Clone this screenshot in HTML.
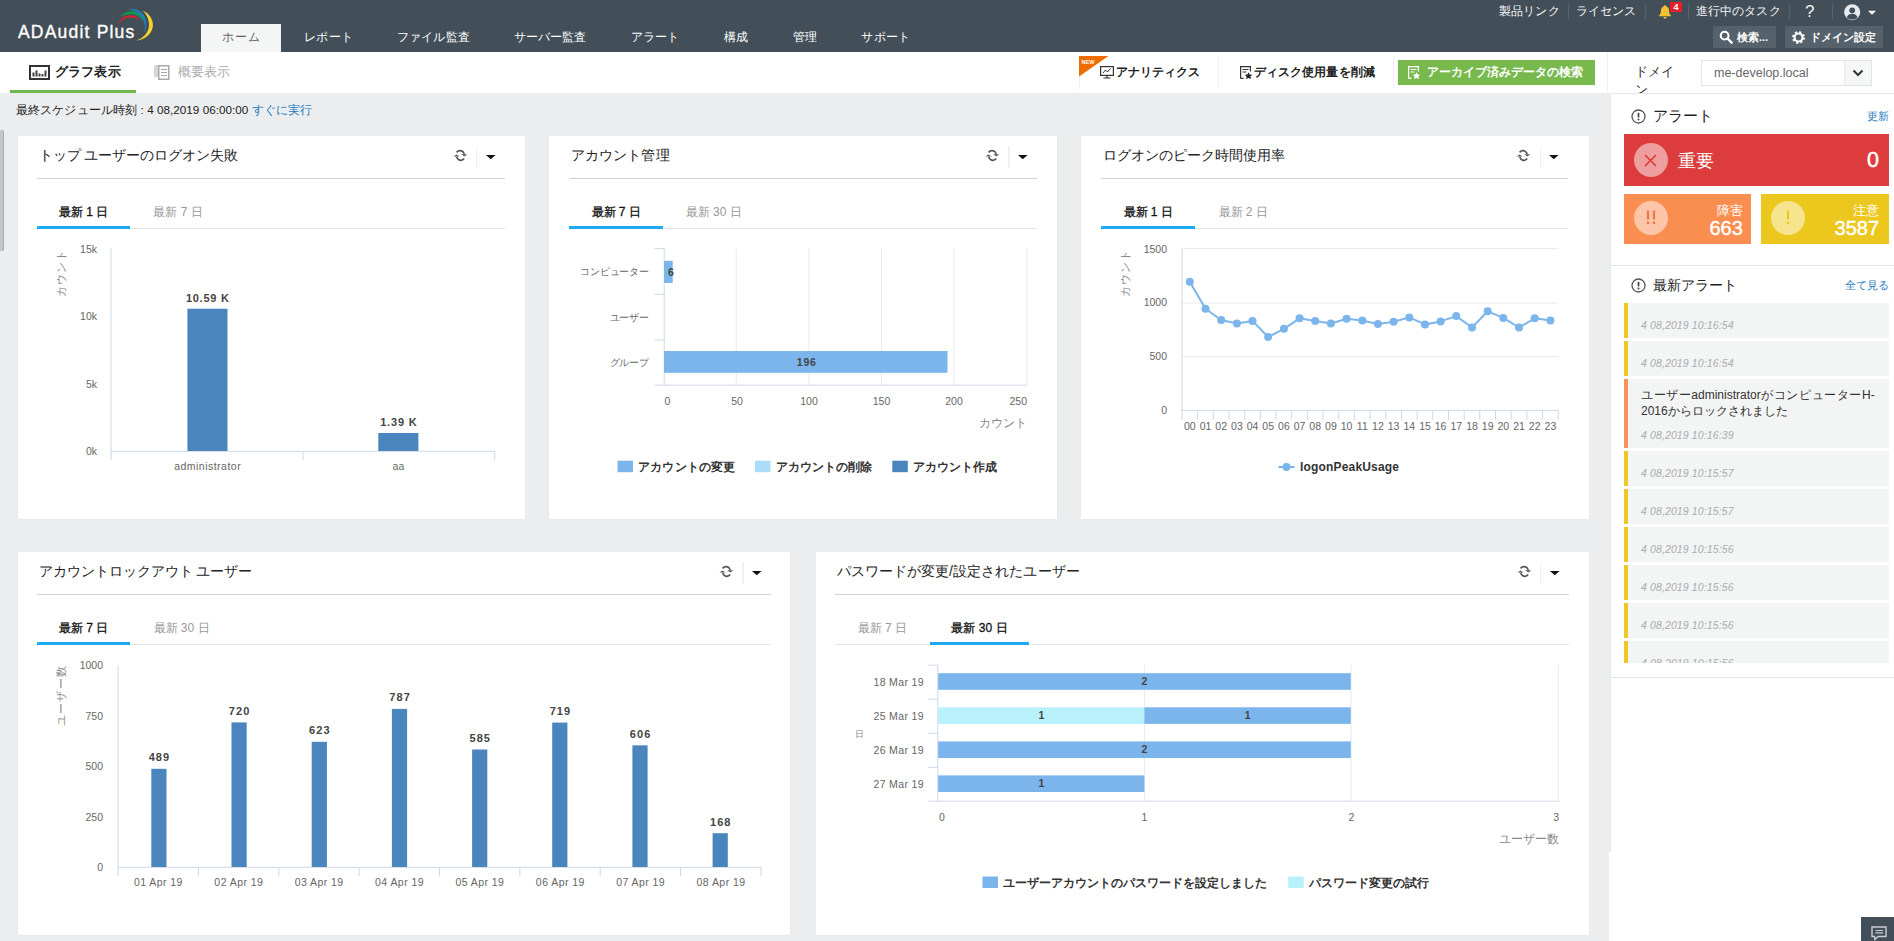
<!DOCTYPE html>
<html lang="ja"><head><meta charset="utf-8"><title>ADAudit Plus</title>
<style>
*{box-sizing:border-box;margin:0;padding:0}
html,body{width:1894px;height:941px;overflow:hidden;background:#ecedef}
body{font-family:"Liberation Sans",sans-serif;font-size:12px;color:#333;position:relative}
.abs{position:absolute}
.nw{white-space:nowrap}
.j{display:inline-block;text-align:justify;text-align-last:justify;white-space:nowrap}
#hdr{position:absolute;left:0;top:0;width:1894px;height:52px;background:#434f58}
#logo{position:absolute;left:18px;top:21px;font-size:17.5px;line-height:22px;color:#fff;letter-spacing:1.2px;white-space:nowrap;-webkit-text-stroke:.35px #fff}
.tab{position:absolute;top:24px;height:28px;line-height:27px;font-size:12.2px;color:#fff;white-space:nowrap;text-align:center}
.tab.on{background:#f4f5f5;color:#666}
.tl{position:absolute;top:3px;height:17px;line-height:17px;font-size:12.1px;color:#f3f5f6;white-space:nowrap}
.tsep{position:absolute;top:3px;width:1px;height:17px;background:#56626b}
.hbtn{position:absolute;top:26px;height:22px;background:#56626b;color:#fff;font-size:11px;font-weight:bold;line-height:22px;white-space:nowrap}
#bar{position:absolute;left:0;top:52px;width:1894px;height:41px;background:#fff}
.bsep{position:absolute;top:4px;width:1px;height:33px;background:#eef0f1}
.btxt{position:absolute;top:11px;height:18px;line-height:18px;font-size:12px;font-weight:bold;color:#222;white-space:nowrap}
.panel{position:absolute;background:#fff;box-shadow:0 0 1px rgba(0,0,0,.08)}
.ptitle{position:absolute;top:8.600px;font-size:14px;line-height:20px;color:#222;white-space:nowrap}
.pline{position:absolute;top:42px;height:1px;background:#cdd1d4}
.ptab{position:absolute;top:66px;height:20px;line-height:20px;font-size:12px;white-space:nowrap;text-align:center;color:#999}
.ptab.on{color:#111;-webkit-text-stroke:.3px #111}
.pul{position:absolute;top:92px;height:1px;background:#e3e6e8}
.pon{position:absolute;top:89.800px;height:3.200px;background:#1eaaf1}
.psep{position:absolute;top:10px;width:1.500px;height:22px;background:#f0f0f0}
svg{position:absolute;overflow:visible}
svg text{font-family:"Liberation Sans",sans-serif}
#side{position:absolute;left:1609.500px;top:93px;width:285px;height:848px;background:#fff;border-left:1px solid #e3e8ea;border-top:1px solid #e3e8ea}
.sh{position:absolute;font-size:14.5px;line-height:20px;color:#222;white-space:nowrap}
.slink{position:absolute;font-size:11px;line-height:16px;color:#1f7bbd;white-space:nowrap;text-align:right}
.abox{position:absolute;color:#fff}
.circ{position:absolute;width:34px;height:34px;border-radius:50%;background:rgba(255,255,255,.5)}
.item{position:absolute;left:1624px;width:265px;height:35px;background:#f3f4f4;border-left:4px solid #f0c526}
.item .d{position:absolute;left:13px;font-size:10.500px;line-height:14px;color:#a9adb0;font-style:italic;white-space:nowrap;letter-spacing:.12px}
</style></head>
<body>
<div id="hdr">
<div id="logo">ADAudit Plus</div>
<svg style="left:114px;top:4px" width="44" height="42" viewBox="114 4 44 42">
<path d="M118.100 25.200C119.500 18.500 125 15 130 15.200C135 15.400 139 17.800 141.200 21C138 18.600 134.500 17.600 130 17.600C125 17.600 121 20 118.100 25.200Z" fill="#d9232e"/>
<path d="M120 16.800C124 12.500 128.500 11 132.500 11.300C139 11.800 143.600 17 144.800 24C142.500 18.500 138 14.600 132 14.200C127.500 13.900 123.500 14.800 120 16.800Z" fill="#0f9a4a"/>
<path d="M128.800 9.400C134 8.300 139.500 10 143 14C147 18.600 147.300 27 144 33C145.600 27 144.800 21 141.600 16.600C138.500 12.400 134 10.200 128.800 9.400Z" fill="#1d7fc1"/>
<path d="M142.500 10.400C149 13 153.200 19 152.900 25.500C152.500 33.500 145.500 39.600 136.200 40.800C143.500 38 148.600 32.400 149 25.500C149.300 19.500 146.800 14.400 142.500 10.400Z" fill="#f6d12b"/>
</svg>
<div class="tab on" style="left:201px;width:80px"><span class="j" style="width:37.6px">ホーム</span></div>
<div class="tab" style="left:282.5px;width:92px"><span class="j" style="width:48.2px">レポート</span></div>
<div class="tab" style="left:375.3px;width:116px"><span class="j" style="width:72.7px">ファイル監査</span></div>
<div class="tab" style="left:492px;width:116px"><span class="j" style="width:72.8px">サーバー監査</span></div>
<div class="tab" style="left:609px;width:92px"><span class="j" style="width:48.6px">アラート</span></div>
<div class="tab" style="left:701.8px;width:68px"><span class="j" style="width:24.6px">構成</span></div>
<div class="tab" style="left:771px;width:68px"><span class="j" style="width:24.6px">管理</span></div>
<div class="tab" style="left:839.7px;width:92px"><span class="j" style="width:48.7px">サポート</span></div>
<div class="tl" style="left:1498.500px"><span class="j" style="width:61.2px">製品リンク</span></div><div class="tsep" style="left:1568px"></div>
<div class="tl" style="left:1576px"><span class="j" style="width:60.3px">ライセンス</span></div><div class="tsep" style="left:1645px"></div>
<svg style="left:1657px;top:4px" width="16" height="16" viewBox="0 0 16 16"><path d="M8 1.200c.7 0 1.100.4 1.100 1 2 .6 3 2.300 3 4.500 0 2.600.6 3.800 1.900 4.900v.6H2v-.6c1.300-1.100 1.900-2.300 1.900-4.900 0-2.200 1-3.900 3-4.500 0-.6.400-1 1.100-1zM6.400 13h3.200c0 .9-.7 1.600-1.600 1.600s-1.600-.7-1.600-1.600z" fill="#f2c230"/></svg>
<div class="abs" style="left:1670px;top:2px;width:12px;height:10px;background:#e5202c;color:#fff;font-size:9px;font-weight:bold;line-height:10px;text-align:center;border-radius:1px">4</div>
<div class="tsep" style="left:1688px"></div><div class="tl" style="left:1696px"><span class="j" style="width:84.5px">進行中のタスク</span></div><div class="tsep" style="left:1789px"></div>
<div class="tl" style="left:1805px;font-size:17px;top:3px">?</div><div class="tsep" style="left:1832px"></div>
<svg style="left:1844px;top:4px" width="34" height="17" viewBox="0 0 34 17"><circle cx="8.200" cy="8.200" r="8" fill="#e9ecee"/><circle cx="8.200" cy="6.300" r="2.900" fill="#434f58"/><path d="M2.800 13.200c.9-2.300 3-3.400 5.400-3.400s4.500 1.100 5.400 3.400c-1.400 1.500-3.200 2.400-5.400 2.400s-4-.9-5.400-2.400z" fill="#434f58"/><path d="M24 6.800h8l-4 4z" fill="#fff"/></svg>
<div class="hbtn" style="left:1713px;width:63px"><svg style="left:6px;top:4px" width="14" height="14" viewBox="0 0 14 14"><circle cx="5.600" cy="5.600" r="3.900" fill="none" stroke="#fff" stroke-width="2"/><path d="M8.500 8.500l4.200 4.200" stroke="#fff" stroke-width="2.400" stroke-linecap="round"/></svg><span class="abs" style="left:24px"><span class="j" style="width:30.5px">検索...</span></span></div>
<div class="hbtn" style="left:1785px;width:98px"><svg style="left:7px;top:5px" width="13" height="13" viewBox="0 0 13 13"><circle cx="6.500" cy="6.500" r="4" fill="none" stroke="#fff" stroke-width="2.200"/><circle cx="6.500" cy="6.500" r="5.600" fill="none" stroke="#fff" stroke-width="1.600" stroke-dasharray="2.200 2.200"/></svg><span class="abs" style="left:25px"><span class="j" style="width:65.6px">ドメイン設定</span></span></div>
</div>
<div id="bar">
<svg style="left:29px;top:13px" width="21" height="15" viewBox="0 0 21 15"><rect x="1" y="1" width="19" height="13" fill="none" stroke="#333" stroke-width="2"/><path d="M4.500 11.500V7.500M7.500 11.500V5.500M10.500 11.500V8.500M13.500 11.500V9M16.500 11.500V5.500" stroke="#444" stroke-width="2"/></svg>
<div class="abs nw" style="left:55px;top:11px;font-size:13px;font-weight:bold;line-height:18px;color:#222"><span class="j" style="width:65.5px">グラフ表示</span></div>
<div class="abs" style="left:10px;top:38px;width:125.500px;height:3px;background:#70b84a"></div>
<svg style="left:154px;top:13px" width="16" height="15" viewBox="0 0 16 15"><path d="M0 0h4v12H0z" fill="#d5d7d8"/><rect x="4.750" y=".75" width="10" height="13.500" fill="#fff" stroke="#aaa" stroke-width="1.500"/><path d="M7 4.500h6M7 7.500h6M7 10.500h6" stroke="#aaa" stroke-width="1"/></svg>
<div class="abs nw" style="left:178px;top:11px;font-size:13px;line-height:18px;color:#aaa"><span class="j" style="width:52px">概要表示</span></div>
<div class="bsep" style="left:1079px"></div>
<svg style="left:1079px;top:4px" width="30" height="21" viewBox="0 0 30 21"><path d="M0 0h29.500L0 20.500z" fill="#ef6c00"/><text x="2.500" y="8" font-size="5.500" font-weight="bold" fill="#fff">NEW</text></svg>
<svg style="left:1100px;top:14px" width="14" height="13" viewBox="0 0 14 13"><rect x=".6" y=".6" width="12.800" height="8.800" fill="none" stroke="#333" stroke-width="1.200"/><path d="M3 7l2.500-3 2 2 3-3.500" fill="none" stroke="#333" stroke-width="1"/><path d="M7 9.500v2M3.500 12h7" stroke="#333" stroke-width="1.200"/></svg>
<div class="btxt" style="left:1116px"><span class="j" style="width:83px">アナリティクス</span></div>
<div class="bsep" style="left:1217.500px"></div>
<svg style="left:1240px;top:14px" width="13" height="13" viewBox="0 0 13 13"><path d="M.6 12.400V.6h9.800v5M.6 12.400h3" fill="none" stroke="#333" stroke-width="1.200"/><path d="M2.500 3.500h6M2.500 6h4" stroke="#333" stroke-width="1"/><path d="M8.500 6.200l1.200 2.300 2.600.3-1.900 1.800.5 2.500-2.400-1.200-2.400 1.200.5-2.500-1.900-1.800 2.600-.3z" fill="#222"/></svg>
<div class="btxt" style="left:1254px"><span class="j" style="width:120.7px">ディスク使用量を削減</span></div>
<div class="bsep" style="left:1392.500px"></div>
<div class="abs" style="left:1398px;top:8.200px;width:196.500px;height:24.500px;background:#78b94e"></div>
<svg style="left:1408px;top:14px" width="13" height="13" viewBox="0 0 13 13"><path d="M.6 12.400V.6h9.800v5M.6 12.400h3" fill="none" stroke="#fff" stroke-width="1.200"/><path d="M2.500 3.500h6M2.500 6h4" stroke="#fff" stroke-width="1"/><path d="M8.500 6.200l1.200 2.300 2.600.3-1.900 1.800.5 2.500-2.400-1.200-2.400 1.200.5-2.500-1.900-1.800 2.600-.3z" fill="#fff"/></svg>
<div class="btxt" style="left:1426.700px;color:#fff"><span class="j" style="width:156.3px">アーカイブ済みデータの検索</span></div>
<div class="abs" style="left:1606.500px;top:0;width:1px;height:41px;background:#eef1f2"></div>
<div class="abs nw" style="left:1635px;top:11px;font-size:13px;line-height:18px;color:#333"><span class="j" style="width:33.5px">ドメイ</span><br>ン</div>
<div class="abs" style="left:1700.500px;top:7.500px;width:171px;height:26px;border:1px solid #e1e5e7;background:#fff"><span class="abs nw" style="left:12.500px;top:3px;font-size:12.500px;line-height:18px;color:#666">me-develop.local</span><div class="abs" style="left:142px;top:0;width:27px;height:24px;background:#f5f6f6;border-left:1px solid #e8ebec"></div><svg style="left:150px;top:8px" width="12" height="8" viewBox="0 0 12 8"><path d="M1.500 1.500l4.500 4.500 4.500-4.500" fill="none" stroke="#333" stroke-width="2"/></svg></div>
</div>
<div class="abs nw" style="left:16px;top:102px;font-size:11.700px;line-height:16px;color:#222"><span class="j" style="width:296px">最終スケジュール時刻 : 4 08,2019 06:00:00 <span style="color:#1f7bbd">すぐに実行</span></span></div>
<div class="abs" style="left:0;top:130px;width:3.500px;height:121px;background:#c4c6c8;border-right:1px solid #aaa;border-radius:0 2px 2px 0"></div>
<div class="panel" style="left:18px;top:136px;width:507px;height:383px">
<div class="ptitle" style="left:20.5px"><span class="j" style="width:198.3px">トップ ユーザーのログオン失敗</span></div>
<svg style="left:434.5px;top:13px" width="15" height="13" viewBox="0 0 15 13"><path d="M3.600 3.400C5.600 .9 9.600 .9 11.300 4.900M11.200 9.600C9.200 12.200 5.400 12.200 3.700 8" fill="none" stroke="#555" stroke-width="1.700"/><path d="M8.300 5.200h6l-3 2.300zM.5 7.500h6.100L3.500 5.400z" fill="#555"/></svg><div class="psep" style="left:457.7px"></div><svg style="left:467.5px;top:18.700px" width="10" height="5" viewBox="0 0 10 5"><path d="M0 0h9.600L4.800 4.300z" fill="#111"/></svg>
<div class="pline" style="left:19px;width:467.5px"></div><div class="pul" style="left:19px;width:467.5px"></div>
<div class="ptab on" style="left:19px;width:93px"><span class="j" style="width:49px">最新 1 日</span></div><div class="pon" style="left:19px;width:93px"></div><div class="ptab" style="left:112px;width:96px"><span class="j" style="width:49.3px">最新 7 日</span></div>
<svg style="left:0;top:0" width="507" height="383" viewBox="18 136 507 383">
<path d="M111 248.500V451.300M111 451.300H495M111 451.300v9M303 451.300v9M494.700 451.300v9" fill="none" stroke="#cdd8e8" stroke-width="1"/>
<text x="97" y="253.1" font-size="10.5" fill="#666" text-anchor="end">15k</text><text x="97" y="320.1" font-size="10.5" fill="#666" text-anchor="end">10k</text><text x="97" y="387.6" font-size="10.5" fill="#666" text-anchor="end">5k</text><text x="97" y="455.1" font-size="10.5" fill="#666" text-anchor="end">0k</text>
<text transform="translate(65 249.500) rotate(-90)" font-size="11" fill="#888" text-anchor="end" textLength="47">カウント</text>
<rect x="187.4" y="308.7" width="40.1" height="142.3" fill="#4a86bd"/><text x="207.4" y="301.5" font-size="11" fill="#444" text-anchor="middle" font-weight="bold" textLength="43">10.59 K</text><text x="207.4" y="470.3" font-size="10.5" fill="#666" text-anchor="middle" textLength="66.5">administrator</text>
<rect x="378.3" y="433" width="40.1" height="18" fill="#4a86bd"/><text x="398.4" y="425.8" font-size="11" fill="#444" text-anchor="middle" font-weight="bold" textLength="36.5">1.39 K</text><text x="398.4" y="470.3" font-size="10.5" fill="#666" text-anchor="middle">aa</text>
</svg>
</div>
<div class="panel" style="left:549px;top:136px;width:508px;height:383px">
<div class="ptitle" style="left:21.5px"><span class="j" style="width:99px">アカウント管理</span></div>
<svg style="left:436px;top:13px" width="15" height="13" viewBox="0 0 15 13"><path d="M3.600 3.400C5.600 .9 9.600 .9 11.300 4.900M11.200 9.600C9.200 12.200 5.400 12.200 3.700 8" fill="none" stroke="#555" stroke-width="1.700"/><path d="M8.300 5.200h6l-3 2.300zM.5 7.500h6.100L3.500 5.400z" fill="#555"/></svg><div class="psep" style="left:459.2px"></div><svg style="left:469px;top:18.700px" width="10" height="5" viewBox="0 0 10 5"><path d="M0 0h9.600L4.800 4.300z" fill="#111"/></svg>
<div class="pline" style="left:20px;width:468px"></div><div class="pul" style="left:20px;width:468px"></div>
<div class="ptab on" style="left:20px;width:94px"><span class="j" style="width:49px">最新 7 日</span></div><div class="pon" style="left:20px;width:94px"></div><div class="ptab" style="left:114px;width:101px"><span class="j" style="width:55.5px">最新 30 日</span></div>
<svg style="left:0;top:0" width="508" height="383" viewBox="549 136 508 383">
<path d="M736.2 248.500V385M808.9 248.500V385M881.4 248.500V385M954 248.500V385M1026.8 248.500V385" fill="none" stroke="#e8eaec" stroke-width="1"/>
<path d="M664.200 248.500V385.200M654.500 385.200H1027M654.500 248.600h10M654.500 294.300h10M654.500 340h10" fill="none" stroke="#cdd8e8" stroke-width="1"/>
<text x="649" y="275.2" font-size="10" fill="#666" text-anchor="end" textLength="69">コンピューター</text><text x="649" y="320.9" font-size="10" fill="#666" text-anchor="end" textLength="39.3">ユーザー</text><text x="649" y="365.5" font-size="10" fill="#666" text-anchor="end" textLength="39.3">グループ</text>
<rect x="664" y="260.800" width="8.700" height="22.200" fill="#7cb5ec"/><rect x="664" y="351" width="283.500" height="21.800" fill="#7cb5ec"/>
<text x="670.8" y="275.5" font-size="10.5" fill="#444" text-anchor="middle" font-weight="bold">6</text><text x="806.3" y="365.7" font-size="10.5" fill="#444" text-anchor="middle" font-weight="bold" textLength="19">196</text>
<text x="664.5" y="404.8" font-size="10.5" fill="#666" text-anchor="start">0</text><text x="737" y="404.8" font-size="10.5" fill="#666" text-anchor="middle">50</text><text x="809" y="404.8" font-size="10.5" fill="#666" text-anchor="middle">100</text><text x="881.5" y="404.8" font-size="10.5" fill="#666" text-anchor="middle">150</text><text x="954" y="404.8" font-size="10.5" fill="#666" text-anchor="middle">200</text><text x="1027" y="404.8" font-size="10.5" fill="#666" text-anchor="end">250</text>
<text x="1027" y="426.5" font-size="12" fill="#888" text-anchor="end" textLength="48">カウント</text>
<rect x="617.5" y="460.700" width="15.500" height="11.500" fill="#7cb5ec"/><text x="638.2" y="471" font-size="12" fill="#333" font-weight="bold" textLength="96.8">アカウントの変更</text><rect x="755" y="460.700" width="15.500" height="11.500" fill="#aaddf9"/><text x="775.7" y="471" font-size="12" fill="#333" font-weight="bold" textLength="96.6">アカウントの削除</text><rect x="892.3" y="460.700" width="15.500" height="11.500" fill="#4a86bd"/><text x="913" y="471" font-size="12" fill="#333" font-weight="bold" textLength="84">アカウント作成</text>
</svg>
</div>
<div class="panel" style="left:1081px;top:136px;width:508px;height:383px">
<div class="ptitle" style="left:21.5px"><span class="j" style="width:182.2px">ログオンのピーク時間使用率</span></div>
<svg style="left:435.3px;top:13px" width="15" height="13" viewBox="0 0 15 13"><path d="M3.600 3.400C5.600 .9 9.600 .9 11.300 4.900M11.200 9.600C9.200 12.200 5.400 12.200 3.700 8" fill="none" stroke="#555" stroke-width="1.700"/><path d="M8.300 5.200h6l-3 2.300zM.5 7.500h6.100L3.500 5.400z" fill="#555"/></svg><div class="psep" style="left:458.5px"></div><svg style="left:468.3px;top:18.700px" width="10" height="5" viewBox="0 0 10 5"><path d="M0 0h9.600L4.800 4.300z" fill="#111"/></svg>
<div class="pline" style="left:20px;width:467.3px"></div><div class="pul" style="left:20px;width:467.3px"></div>
<div class="ptab on" style="left:20px;width:94px"><span class="j" style="width:49px">最新 1 日</span></div><div class="pon" style="left:20px;width:94px"></div><div class="ptab" style="left:114px;width:96px"><span class="j" style="width:49px">最新 2 日</span></div>
<svg style="left:0;top:0" width="508" height="383" viewBox="1081 136 508 383">
<path d="M1182 248.6H1558.2M1182 303H1558.2M1182 356.7H1558.2" fill="none" stroke="#e8eaec" stroke-width="1"/>
<path d="M1182 248.500V410.400H1558.2M1182 410.400v9.400M1197.7 410.400v9.400M1213.3 410.400v9.400M1229 410.400v9.400M1244.7 410.400v9.400M1260.4 410.400v9.400M1276 410.400v9.400M1291.7 410.400v9.400M1307.4 410.400v9.400M1323.1 410.400v9.400M1338.8 410.400v9.400M1354.4 410.400v9.400M1370.1 410.400v9.400M1385.8 410.400v9.400M1401.5 410.400v9.400M1417.1 410.400v9.400M1432.8 410.400v9.400M1448.5 410.400v9.400M1464.2 410.400v9.400M1479.8 410.400v9.400M1495.5 410.400v9.400M1511.2 410.400v9.400M1526.9 410.400v9.400M1542.5 410.400v9.400M1558.2 410.400v9.400" fill="none" stroke="#cdd8e8" stroke-width="1"/>
<text x="1167" y="253.2" font-size="10.5" fill="#666" text-anchor="end">1500</text><text x="1167" y="306.2" font-size="10.5" fill="#666" text-anchor="end">1000</text><text x="1167" y="360.2" font-size="10.5" fill="#666" text-anchor="end">500</text><text x="1167" y="413.7" font-size="10.5" fill="#666" text-anchor="end">0</text>
<text transform="translate(1128.500 249.500) rotate(-90)" font-size="11" fill="#888" text-anchor="end" textLength="47">カウント</text>
<path d="M1189.8 281.7L1205.5 308.7L1221.2 320L1236.9 323.5L1252.5 320.9L1268.2 337L1283.9 328.8L1299.6 318.3L1315.2 320.9L1330.9 323.5L1346.6 318.7L1362.3 320.5L1377.9 324L1393.6 321.8L1409.3 317.4L1425 324.4L1440.6 321.4L1456.3 316.1L1472 327.5L1487.7 311.3L1503.3 317.9L1519 327.5L1534.7 318.3L1550.4 320.5" fill="none" stroke="#7cb5ec" stroke-width="2" stroke-linejoin="round"/>
<g fill="#7cb5ec"><circle cx="1189.8" cy="281.7" r="4"/><circle cx="1205.5" cy="308.7" r="4"/><circle cx="1221.2" cy="320" r="4"/><circle cx="1236.9" cy="323.5" r="4"/><circle cx="1252.5" cy="320.9" r="4"/><circle cx="1268.2" cy="337" r="4"/><circle cx="1283.9" cy="328.8" r="4"/><circle cx="1299.6" cy="318.3" r="4"/><circle cx="1315.2" cy="320.9" r="4"/><circle cx="1330.9" cy="323.5" r="4"/><circle cx="1346.6" cy="318.7" r="4"/><circle cx="1362.3" cy="320.5" r="4"/><circle cx="1377.9" cy="324" r="4"/><circle cx="1393.6" cy="321.8" r="4"/><circle cx="1409.3" cy="317.4" r="4"/><circle cx="1425" cy="324.4" r="4"/><circle cx="1440.6" cy="321.4" r="4"/><circle cx="1456.3" cy="316.1" r="4"/><circle cx="1472" cy="327.5" r="4"/><circle cx="1487.7" cy="311.3" r="4"/><circle cx="1503.3" cy="317.9" r="4"/><circle cx="1519" cy="327.5" r="4"/><circle cx="1534.7" cy="318.3" r="4"/><circle cx="1550.4" cy="320.5" r="4"/></g>
<g font-size="10.500" fill="#666" text-anchor="middle"><text x="1189.8" y="429.500">00</text><text x="1205.5" y="429.500">01</text><text x="1221.2" y="429.500">02</text><text x="1236.9" y="429.500">03</text><text x="1252.5" y="429.500">04</text><text x="1268.2" y="429.500">05</text><text x="1283.9" y="429.500">06</text><text x="1299.6" y="429.500">07</text><text x="1315.2" y="429.500">08</text><text x="1330.9" y="429.500">09</text><text x="1346.6" y="429.500">10</text><text x="1362.3" y="429.500">11</text><text x="1377.9" y="429.500">12</text><text x="1393.6" y="429.500">13</text><text x="1409.3" y="429.500">14</text><text x="1425" y="429.500">15</text><text x="1440.6" y="429.500">16</text><text x="1456.3" y="429.500">17</text><text x="1472" y="429.500">18</text><text x="1487.7" y="429.500">19</text><text x="1503.3" y="429.500">20</text><text x="1519" y="429.500">21</text><text x="1534.7" y="429.500">22</text><text x="1550.4" y="429.500">23</text></g>
<path d="M1278.500 467h16" stroke="#7cb5ec" stroke-width="2"/><circle cx="1286.500" cy="467" r="4" fill="#7cb5ec"/><text x="1300" y="471" font-size="12" fill="#333" font-weight="bold" textLength="99">logonPeakUsage</text>
</svg>
</div>
<div class="panel" style="left:18px;top:552px;width:772px;height:383px">
<div class="ptitle" style="left:20.5px"><span class="j" style="width:214px">アカウントロックアウト ユーザー</span></div>
<svg style="left:700.8px;top:13px" width="15" height="13" viewBox="0 0 15 13"><path d="M3.600 3.400C5.600 .9 9.600 .9 11.300 4.900M11.200 9.600C9.200 12.200 5.400 12.200 3.700 8" fill="none" stroke="#555" stroke-width="1.700"/><path d="M8.300 5.200h6l-3 2.300zM.5 7.500h6.100L3.500 5.400z" fill="#555"/></svg><div class="psep" style="left:724px"></div><svg style="left:733.8px;top:18.700px" width="10" height="5" viewBox="0 0 10 5"><path d="M0 0h9.600L4.800 4.300z" fill="#111"/></svg>
<div class="pline" style="left:19px;width:733.8px"></div><div class="pul" style="left:19px;width:733.8px"></div>
<div class="ptab on" style="left:19px;width:93px"><span class="j" style="width:49px">最新 7 日</span></div><div class="pon" style="left:19px;width:93px"></div><div class="ptab" style="left:112px;width:103px"><span class="j" style="width:56px">最新 30 日</span></div>
<svg style="left:0;top:0" width="772" height="383" viewBox="18 552 772 383">
<path d="M118 665.5V867.3H761M118 867.3v9M198.4 867.3v9M278.8 867.3v9M359.1 867.3v9M439.5 867.3v9M519.9 867.3v9M600.2 867.3v9M680.6 867.3v9M761 867.3v9" fill="none" stroke="#cdd8e8" stroke-width="1"/>
<text x="103" y="669.2" font-size="10.5" fill="#666" text-anchor="end">1000</text><text x="103" y="719.7" font-size="10.5" fill="#666" text-anchor="end">750</text><text x="103" y="770.2" font-size="10.5" fill="#666" text-anchor="end">500</text><text x="103" y="820.7" font-size="10.5" fill="#666" text-anchor="end">250</text><text x="103" y="871.2" font-size="10.5" fill="#666" text-anchor="end">0</text>
<text transform="translate(65 666) rotate(-90)" font-size="11" fill="#888" text-anchor="end" textLength="60">ユーザー数</text>
<rect x="151.3" y="768.8" width="15.200" height="98.2" fill="#4a86bd"/><text x="158.9" y="761.1" font-size="11" fill="#444" text-anchor="middle" font-weight="bold" textLength="20.5">489</text><text x="158.2" y="886" font-size="10.5" fill="#666" text-anchor="middle" textLength="48.5">01 Apr 19</text>
<rect x="231.5" y="722.4" width="15.200" height="144.6" fill="#4a86bd"/><text x="239.1" y="714.7" font-size="11" fill="#444" text-anchor="middle" font-weight="bold" textLength="20.5">720</text><text x="238.6" y="886" font-size="10.5" fill="#666" text-anchor="middle" textLength="48.5">02 Apr 19</text>
<rect x="311.7" y="741.8" width="15.200" height="125.2" fill="#4a86bd"/><text x="319.3" y="734.1" font-size="11" fill="#444" text-anchor="middle" font-weight="bold" textLength="20.5">623</text><text x="318.9" y="886" font-size="10.5" fill="#666" text-anchor="middle" textLength="48.5">03 Apr 19</text>
<rect x="391.9" y="708.9" width="15.200" height="158.1" fill="#4a86bd"/><text x="399.5" y="701.2" font-size="11" fill="#444" text-anchor="middle" font-weight="bold" textLength="20.5">787</text><text x="399.3" y="886" font-size="10.5" fill="#666" text-anchor="middle" textLength="48.5">04 Apr 19</text>
<rect x="472.1" y="749.5" width="15.200" height="117.5" fill="#4a86bd"/><text x="479.7" y="741.8" font-size="11" fill="#444" text-anchor="middle" font-weight="bold" textLength="20.5">585</text><text x="479.7" y="886" font-size="10.5" fill="#666" text-anchor="middle" textLength="48.5">05 Apr 19</text>
<rect x="552.2" y="722.6" width="15.200" height="144.4" fill="#4a86bd"/><text x="559.9" y="714.9" font-size="11" fill="#444" text-anchor="middle" font-weight="bold" textLength="20.5">719</text><text x="560.1" y="886" font-size="10.5" fill="#666" text-anchor="middle" textLength="48.5">06 Apr 19</text>
<rect x="632.4" y="745.3" width="15.200" height="121.7" fill="#4a86bd"/><text x="640" y="737.6" font-size="11" fill="#444" text-anchor="middle" font-weight="bold" textLength="20.5">606</text><text x="640.4" y="886" font-size="10.5" fill="#666" text-anchor="middle" textLength="48.5">07 Apr 19</text>
<rect x="712.6" y="833.2" width="15.200" height="33.8" fill="#4a86bd"/><text x="720.2" y="825.5" font-size="11" fill="#444" text-anchor="middle" font-weight="bold" textLength="20.5">168</text><text x="720.8" y="886" font-size="10.5" fill="#666" text-anchor="middle" textLength="48.5">08 Apr 19</text>
</svg>
</div>
<div class="panel" style="left:816px;top:552px;width:773px;height:383px">
<div class="ptitle" style="left:20.5px"><span class="j" style="width:243.2px">パスワードが変更/設定されたユーザー</span></div>
<svg style="left:700.6px;top:13px" width="15" height="13" viewBox="0 0 15 13"><path d="M3.600 3.400C5.600 .9 9.600 .9 11.300 4.900M11.200 9.600C9.200 12.200 5.400 12.200 3.700 8" fill="none" stroke="#555" stroke-width="1.700"/><path d="M8.300 5.200h6l-3 2.300zM.5 7.500h6.100L3.500 5.400z" fill="#555"/></svg><div class="psep" style="left:723.8px"></div><svg style="left:733.6px;top:18.700px" width="10" height="5" viewBox="0 0 10 5"><path d="M0 0h9.600L4.800 4.300z" fill="#111"/></svg>
<div class="pline" style="left:19px;width:733.6px"></div><div class="pul" style="left:19px;width:733.6px"></div>
<div class="ptab" style="left:19px;width:94.7px"><span class="j" style="width:49.4px">最新 7 日</span></div><div class="ptab on" style="left:113.7px;width:99.6px"><span class="j" style="width:56px">最新 30 日</span></div><div class="pon" style="left:113.7px;width:99.6px"></div>
<svg style="left:0;top:0" width="773" height="383" viewBox="816 552 773 383">
<path d="M1144.4 665V801M1351 665V801M1558.4 665V801" fill="none" stroke="#e8eaec" stroke-width="1"/>
<path d="M937.800 665V801.200M928 801.200H1559M928 665.2h10M928 699.2h10M928 733.3h10M928 767.3h10" fill="none" stroke="#cdd8e8" stroke-width="1"/>
<rect x="938.2" y="673.2" width="412.6" height="16.600" fill="#7cb5ec"/><text x="1144.5" y="684.5" font-size="10.5" fill="#444" text-anchor="middle" font-weight="bold">2</text><text x="923.5" y="685.5" font-size="10.5" fill="#666" text-anchor="end" textLength="50">18 Mar 19</text>
<rect x="938.2" y="707.3" width="206.2" height="16.600" fill="#b8f1fc"/><text x="1041.3" y="718.6" font-size="10.5" fill="#444" text-anchor="middle" font-weight="bold">1</text><rect x="1144.4" y="707.3" width="206.4" height="16.600" fill="#7cb5ec"/><text x="1247.6" y="718.6" font-size="10.5" fill="#444" text-anchor="middle" font-weight="bold">1</text><text x="923.5" y="719.6" font-size="10.5" fill="#666" text-anchor="end" textLength="50">25 Mar 19</text>
<rect x="938.2" y="741.4" width="412.6" height="16.600" fill="#7cb5ec"/><text x="1144.5" y="752.7" font-size="10.5" fill="#444" text-anchor="middle" font-weight="bold">2</text><text x="923.5" y="753.7" font-size="10.5" fill="#666" text-anchor="end" textLength="50">26 Mar 19</text>
<rect x="938.2" y="775.4" width="206.2" height="16.600" fill="#7cb5ec"/><text x="1041.3" y="786.7" font-size="10.5" fill="#444" text-anchor="middle" font-weight="bold">1</text><text x="923.5" y="787.7" font-size="10.5" fill="#666" text-anchor="end" textLength="50">27 Mar 19</text>
<text x="859" y="736.5" font-size="9" fill="#888" text-anchor="middle">日</text>
<text x="939" y="821" font-size="10.5" fill="#666" text-anchor="start">0</text><text x="1144.5" y="821" font-size="10.5" fill="#666" text-anchor="middle">1</text><text x="1351.5" y="821" font-size="10.5" fill="#666" text-anchor="middle">2</text><text x="1559" y="821" font-size="10.5" fill="#666" text-anchor="end">3</text>
<text x="1558.5" y="843" font-size="12" fill="#888" text-anchor="end" textLength="59.8">ユーザー数</text>
<rect x="982.5" y="876.500" width="15.500" height="11.500" fill="#7cb5ec"/><text x="1003.2" y="886.5" font-size="12" fill="#333" font-weight="bold" textLength="264.2">ユーザーアカウントのパスワードを設定しました</text><rect x="1288.2" y="876.500" width="15.500" height="11.500" fill="#b8f1fc"/><text x="1308.9" y="886.5" font-size="12" fill="#333" font-weight="bold" textLength="120.1">パスワード変更の試行</text>
</svg>
</div>

<div id="side"></div>
<div class="abs" style="left:1609px;top:852px;width:2px;height:89px;background:#fff"></div>
<svg style="left:1631px;top:108.7px" width="15" height="15" viewBox="0 0 15 15"><circle cx="7.500" cy="7.500" r="6.500" fill="none" stroke="#555" stroke-width="1.300"/><path d="M7.500 3.800v4.600" stroke="#444" stroke-width="1.700"/><circle cx="7.500" cy="10.600" r="1" fill="#444"/></svg><div class="sh" style="left:1652.500px;top:106px"><span class="j" style="width:56.2px">アラート</span></div><div class="slink" style="left:1850px;top:108px;width:39px"><span class="j" style="width:22px">更新</span></div>
<div class="abox" style="left:1624px;top:134px;width:264.500px;height:51.700px;background:#dc3c3c"><div class="circ" style="left:9.600px;top:9.400px"></div><svg style="left:20px;top:20px" width="13" height="13" viewBox="0 0 13 13"><path d="M1 1l11 11M12 1L1 12" stroke="#dc3c3c" stroke-width="1.700"/></svg><span class="abs nw" style="left:54px;top:14.500px;font-size:18px;line-height:24px"><span class="j" style="width:36px">重要</span></span><span class="abs nw" style="right:9.500px;top:13px;font-size:21.500px;line-height:26px;-webkit-text-stroke:.5px #fff">0</span></div>
<div class="abox" style="left:1624px;top:194.200px;width:127.300px;height:49.500px;background:#fa8d50"><div class="circ" style="left:9.600px;top:7px"></div><svg style="left:20px;top:15px" width="14" height="18" viewBox="0 0 14 18"><path d="M4 1.500v9M10 1.500v9" stroke="#f0784a" stroke-width="2.400"/><path d="M2.800 12.500h2.400v2.400H2.800zM8.800 12.500h2.400v2.400H8.800z" fill="#f0784a"/></svg><span class="abs nw" style="right:8.500px;top:7.500px;font-size:13px;line-height:17px"><span class="j" style="width:26px">障害</span></span><span class="abs nw" style="right:8.500px;top:22px;font-size:20px;line-height:24px;-webkit-text-stroke:.45px #fff">663</span></div>
<div class="abox" style="left:1761.400px;top:194.200px;width:127.200px;height:49.500px;background:#ecc81e"><div class="circ" style="left:9.600px;top:7px"></div><svg style="left:23.500px;top:15px" width="6" height="18" viewBox="0 0 6 18"><path d="M3 1.500v9" stroke="#ecc81e" stroke-width="2"/><circle cx="3" cy="13.800" r="1.400" fill="#ecc81e"/></svg><span class="abs nw" style="right:9.500px;top:7.500px;font-size:13px;line-height:17px"><span class="j" style="width:26px">注意</span></span><span class="abs nw" style="right:9.500px;top:22px;font-size:20px;line-height:24px;-webkit-text-stroke:.45px #fff">3587</span></div>
<div class="abs" style="left:1610.500px;top:265px;width:284px;height:1px;background:#e1e8ea"></div>
<svg style="left:1631px;top:277.5px" width="15" height="15" viewBox="0 0 15 15"><circle cx="7.500" cy="7.500" r="6.500" fill="none" stroke="#555" stroke-width="1.300"/><path d="M7.500 3.800v4.600" stroke="#444" stroke-width="1.700"/><circle cx="7.500" cy="10.600" r="1" fill="#444"/></svg><div class="sh" style="left:1652.500px;top:275px;font-size:14px"><span class="j" style="width:84.3px">最新アラート</span></div><div class="slink" style="left:1830px;top:277px;width:58.500px"><span class="j" style="width:43.5px">全て見る</span></div>
<div class="abs" style="left:1611px;top:300px;width:283px;height:363px;overflow:hidden"><div class="abs" style="left:-1611px;top:-300px;width:1894px;height:700px">
<div class="item" style="top:303px"><div class="d" style="top:14.500px">4 08,2019 10:16:54</div></div>
<div class="item" style="top:341.2px"><div class="d" style="top:14.500px">4 08,2019 10:16:54</div></div>
<div class="item" style="top:379.2px;height:68.700px;border-left-color:#f9935a"><div class="abs nw" style="left:13px;top:8px;font-size:12px;line-height:16px;color:#333"><span class="j" style="width:233.7px">ユーザーadministratorがコンピューターH-</span><br><span class="j" style="width:147.4px">2016からロックされました</span></div><div class="d" style="top:48.500px">4 08,2019 10:16:39</div></div>
<div class="item" style="top:451.3px"><div class="d" style="top:14.500px">4 08,2019 10:15:57</div></div>
<div class="item" style="top:489.3px"><div class="d" style="top:14.500px">4 08,2019 10:15:57</div></div>
<div class="item" style="top:527.3px"><div class="d" style="top:14.500px">4 08,2019 10:15:56</div></div>
<div class="item" style="top:565.3px"><div class="d" style="top:14.500px">4 08,2019 10:15:56</div></div>
<div class="item" style="top:603.3px"><div class="d" style="top:14.500px">4 08,2019 10:15:56</div></div>
<div class="item" style="top:641.3px"><div class="d" style="top:14.500px">4 08,2019 10:15:56</div></div>
</div></div>
<div class="abs" style="left:1610.500px;top:676.500px;width:284px;height:1px;background:#dfe5e7"></div>
<div class="abs" style="left:1861px;top:917px;width:33px;height:24px;background:#434f58"><svg style="left:10px;top:8.500px" width="16" height="15" viewBox="0 0 16 15"><path d="M1 1h14v9.500H7L4 13.500L3.500 10.500H1z" fill="none" stroke="#c9ced3" stroke-width="1.400"/><path d="M4.500 4.500h7.500M4.500 6.900h7.500" stroke="#c9ced3" stroke-width="1.200"/></svg></div>

</body></html>
